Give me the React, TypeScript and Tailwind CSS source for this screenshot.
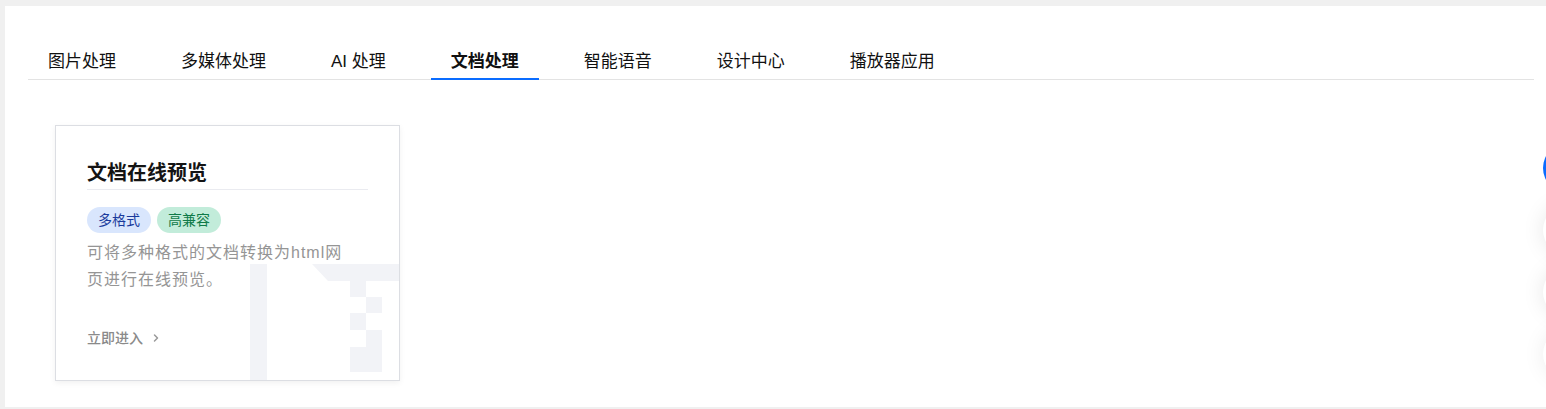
import { ChevronRight } from "lucide-react";

const tabs = ["图片处理", "多媒体处理", "AI 处理", "文档处理", "智能语音", "设计中心", "播放器应用"];
const activeTab = "文档处理";

const font = { fontFamily: '"Liberation Sans", "Noto Sans CJK SC", sans-serif' };

// decorative archive-file outline that sits in the card's bottom-right corner
function ZipMark() {
  return (
    <svg
      className="pointer-events-none absolute left-[194px] top-[138px]"
      width="150"
      height="117"
      viewBox="0 0 150 117"
      fill="#f2f3f7"
    >
      <rect x="0" y="0" width="17" height="117" />
      <polygon points="62,0 150,0 150,17 78,17" />
      <rect x="100" y="17" width="16" height="16" />
      <rect x="116" y="33" width="16" height="16" />
      <rect x="100" y="49" width="16" height="17" />
      <rect x="116" y="66" width="16" height="17" />
      <rect x="100" y="83" width="32" height="25" />
    </svg>
  );
}

function ProductCard() {
  return (
    <div className="relative ml-[27px] h-[256px] w-[345px] overflow-hidden border border-[#dcdee3] bg-white shadow-[0_2px_6px_rgba(0,0,0,0.06)]">
      <ZipMark />
      <div className="relative px-[31px] pt-[33px]">
        <div className="border-b border-[#eaebf0] pb-[2px] text-[20px] font-bold leading-[28px] text-[#141414]">
          文档在线预览
        </div>
        <div className="mt-[17px] flex gap-[6px]">
          <span className="flex h-[26px] items-center rounded-full bg-[#d9e6fd] px-[11px] text-[14px] text-[#1a3a9c]">
            多格式
          </span>
          <span className="flex h-[26px] items-center rounded-full bg-[#c2ecda] px-[11px] text-[14px] text-[#0f7a48]">
            高兼容
          </span>
        </div>
        <p className="mt-[6px] w-[268px] text-[16px] leading-[27px] tracking-[1px] text-[#959595]">
          可将多种格式的文档转换为html网页进行在线预览。
        </p>
        <a className="mt-[35px] flex items-center gap-[7px] text-[14px] font-medium leading-[20px] text-[#8a8a8a]">
          立即进入
          <ChevronRight size={12} strokeWidth={3} className="text-[#9a9a9a]" />
        </a>
      </div>
    </div>
  );
}

function SideTools() {
  return (
    <div className="absolute left-[1543px] top-[143px] flex flex-col gap-[12px]">
      <div className="h-[50px] w-[50px] rounded-full bg-[#0a6cff]" />
      <div className="h-[50px] w-[50px] rounded-full bg-white shadow-[0_0_22px_rgba(0,0,0,0.1)]" />
      <div className="h-[50px] w-[50px] rounded-full bg-white shadow-[0_0_22px_rgba(0,0,0,0.1)]" />
      <div className="h-[50px] w-[50px] rounded-full bg-white shadow-[0_0_22px_rgba(0,0,0,0.08)]" />
    </div>
  );
}

export default function App() {
  return (
    <div className="relative h-[409px] w-full overflow-hidden bg-[#f0f0f0] pl-[5px] pt-[6px]" style={font}>
      <div className="h-[401px] bg-white pl-[23px] pr-[12px] pt-[44px]">
        <div className="flex gap-[25px] border-b border-[#e3e3e3]">
          {tabs.map((t) => {
            const active = t === activeTab;
            return (
              <div
                key={t}
                className={
                  active
                    ? "-mb-px border-b-2 border-[#0a6cff] px-[20px] pb-[4px] text-[17px] font-bold leading-[24px] text-[#111]"
                    : "-mb-px border-b-2 border-transparent px-[20px] pb-[4px] text-[17px] leading-[24px] text-[#111]"
                }
              >
                {t}
              </div>
            );
          })}
        </div>
        <div className="pt-[45px]">
          <ProductCard />
        </div>
      </div>
      <SideTools />
    </div>
  );
}
